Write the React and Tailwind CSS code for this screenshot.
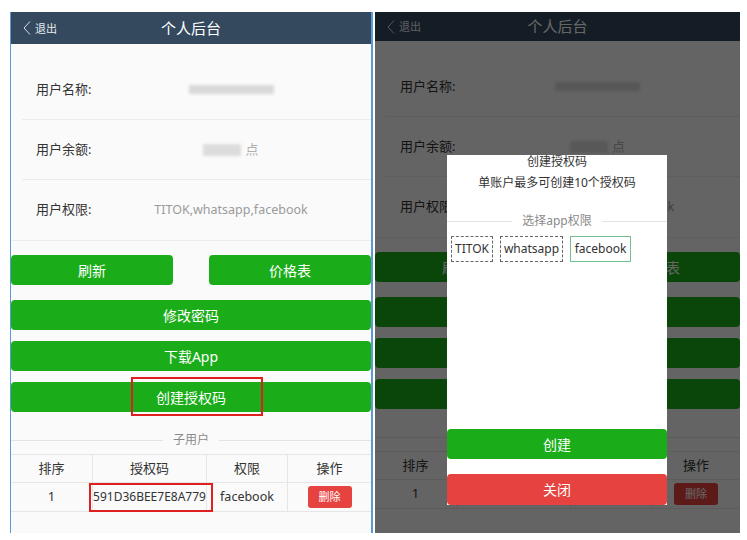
import React from "react";

function Header({ h }) {
  return (
    <div className={`${h} relative flex shrink-0 items-center justify-center bg-[#34495e] text-white`}>
      <div className="absolute left-[12px] flex items-center gap-[4px]">
        <svg width="8" height="14" viewBox="0 0 8 14" fill="none">
          <polyline points="7,0.5 1,7 7,13.5" stroke="#d6dde4" strokeWidth="1" />
        </svg>
        <span className="text-[11px] leading-none text-[#e6ebef]">退出</span>
      </div>
      <span className="text-[15px] leading-none">个人后台</span>
    </div>
  );
}

function InfoRow({ label, children, last }) {
  return (
    <div className={`flex h-[60px] items-center ${last ? "" : "border-b border-[#ececec]"}`}>
      <span className="w-[69px] shrink-0 whitespace-nowrap pl-[14px] text-[13px] text-[#333]">{label}</span>
      <div className="flex flex-1 items-center justify-center whitespace-nowrap text-[12.5px] text-[#9a9a9a]">
        {children}
      </div>
    </div>
  );
}

function GreenBtn({ children, className = "" }) {
  return (
    <button className={`flex h-[30px] items-center justify-center rounded-[4px] bg-[#1aad19] text-[14px] text-white ${className}`}>
      {children}
    </button>
  );
}

function Divider({ text, className = "" }) {
  return (
    <div className={`flex items-center ${className}`}>
      <div className="h-px flex-1 bg-[#e3e3e3]" />
      <span className="px-[10px] text-[12px] leading-none text-[#8a8a8a]">{text}</span>
      <div className="h-px flex-1 bg-[#e3e3e3]" />
    </div>
  );
}

function Screen({ headerH, marked }) {
  return (
    <>
      <Header h={headerH} />
      <div className="border-b border-[#ececec] pt-4">
        <div className="pl-[11px]">
          <InfoRow label="用户名称:">
            <div className="h-[9px] w-[85px] bg-[#d9d9d9] blur-[1.5px]" />
          </InfoRow>
          <InfoRow label="用户余额:">
            <div className="h-[12px] w-[38px] bg-[#dcdcdc] blur-[1.5px]" />
            <span className="ml-[4px] text-[13px] text-[#b0b0b0]">点</span>
          </InfoRow>
          <InfoRow label="用户权限:" last>
            TITOK,whatsapp,facebook
          </InfoRow>
        </div>
      </div>

      <div className="mt-[14px] flex flex-col">
        <div className="flex justify-between">
          <GreenBtn className="w-[162px]">刷新</GreenBtn>
          <GreenBtn className="w-[162px]">价格表</GreenBtn>
        </div>
        <GreenBtn className="mt-[15px]">修改密码</GreenBtn>
        <GreenBtn className="mt-[11px]">下载App</GreenBtn>
        <div className="relative mt-[11px]">
          <GreenBtn className="w-full">创建授权码</GreenBtn>
          {marked && (
            <div className="absolute left-[120px] top-[-5px] h-[39px] w-[132px] border-2 border-[#e0201f]" />
          )}
        </div>
      </div>

      <Divider text="子用户" className="mt-[22px]" />

      <div className="mt-[8px] border-b border-[#e6e6e6] text-[13px] text-[#333]">
        <div className="grid h-[28px] grid-cols-[82px_114px_81px_1fr] border-t border-[#e6e6e6]">
          <div className="flex items-center justify-center border-r border-[#e6e6e6]">排序</div>
          <div className="flex items-center justify-center border-r border-[#e6e6e6]">授权码</div>
          <div className="flex items-center justify-center border-r border-[#e6e6e6]">权限</div>
          <div className="flex items-center justify-center">操作</div>
        </div>
        <div className="grid h-[29px] grid-cols-[82px_114px_81px_1fr] border-t border-[#e6e6e6]">
          <div className="flex items-center justify-center border-r border-[#e6e6e6]">1</div>
          <div className="relative flex items-center justify-center border-r border-[#e6e6e6]">
            <span className="whitespace-nowrap text-[12px]">591D36BEE7E8A779</span>
            {marked && (
              <div className="absolute left-[-4px] top-0 h-[29px] w-[124px] border-2 border-[#e0201f]" />
            )}
          </div>
          <div className="flex items-center justify-center border-r border-[#e6e6e6] text-[12.5px]">facebook</div>
          <div className="flex items-center justify-center">
            <span className="flex h-[22px] w-[44px] items-center justify-center rounded-[3px] bg-[#e64340] text-[11px] text-white">
              删除
            </span>
          </div>
        </div>
      </div>
    </>
  );
}

export default function App() {
  return (
    <div className="h-[540px] w-[747px] bg-white font-['Noto_Sans','Noto_Sans_CJK_SC',sans-serif]">
      <div className="flex pt-[12px]">
        <div className="ml-[10px] flex h-[521px] w-[363px] flex-col border-l border-r-2 border-[#5b9bd5] bg-[#fafafa]">
          <Screen headerH="h-[32px]" marked />
        </div>

        <div className="relative ml-[2px] flex h-[521px] w-[365px] flex-col overflow-hidden bg-[#fafafa]">
          <Screen headerH="h-[29px]" />
          <div className="absolute inset-0 bg-black/60" />
          <div className="absolute left-[72px] top-[143px] flex h-[350px] w-[220px] flex-col bg-white">
            <div className="flex flex-col items-center text-[12px] text-[#333]">
              <span className="leading-[14px]">创建授权码</span>
              <span className="mt-[7px] leading-[14px]">单账户最多可创建10个授权码</span>
            </div>
            <Divider text="选择app权限" className="mt-[25px]" />
            <div className="mt-[9px] flex gap-[7px] pl-[4px] text-[12px] text-[#333]">
              <span className="flex h-[26px] w-[42px] items-center justify-center border border-dashed border-[#666]">TITOK</span>
              <span className="flex h-[26px] w-[63px] items-center justify-center border border-dashed border-[#666]">whatsapp</span>
              <span className="flex h-[26px] w-[61px] items-center justify-center border border-[#72c08e]">facebook</span>
            </div>
            <div className="flex-1" />
            <button className="flex h-[30px] items-center justify-center rounded-[4px] bg-[#1aad19] text-[14px] text-white">创建</button>
            <button className="mt-[15px] flex h-[31px] items-center justify-center rounded-[4px] bg-[#e64340] text-[14px] text-white">关闭</button>
          </div>
        </div>
      </div>
    </div>
  );
}
